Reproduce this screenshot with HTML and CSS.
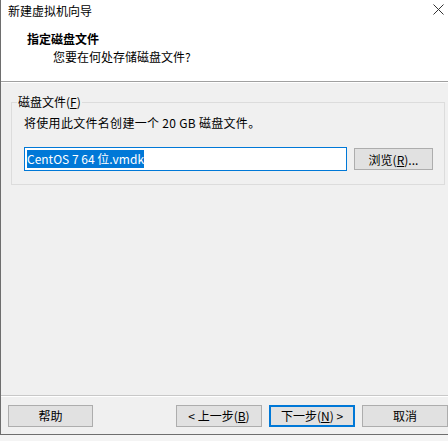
FILE: index.html
```html
<!DOCTYPE html>
<html lang="zh-CN">
<head>
<meta charset="utf-8">
<title>新建虚拟机向导</title>
<link rel="stylesheet" href="styles.css">
</head>
<body>
<div class="window">
  <div class="titlebar">
    <span class="title">新建虚拟机向导</span>
    <svg class="close" width="11" height="11" viewBox="0 0 11 11"><path d="M0.5 0.5L10.5 10.5M10.5 0.5L0.5 10.5" stroke="#333" stroke-width="1"/></svg>
  </div>
  <div class="header">
    <div class="h-title">指定磁盘文件</div>
    <div class="h-sub">您要在何处存储磁盘文件?</div>
  </div>
  <div class="content">
    <fieldset class="group">
      <legend>磁盘文件(<u>F</u>)</legend>
      <div class="desc">将使用此文件名创建一个 20 GB 磁盘文件。</div>
      <div class="row">
        <div class="input"><span class="sel">CentOS 7 64 位.vmdk</span></div>
        <div class="btn browse">浏览(<u>R</u>)...</div>
      </div>
    </fieldset>
  </div>
  <div class="footer">
    <div class="btn help">帮助</div>
    <div class="nav">
      <div class="btn">&lt; 上一步(<u>B</u>)</div>
      <div class="btn default">下一步(<u>N</u>) &gt;</div>
      <div class="btn">取消</div>
    </div>
  </div>
</div>
</body>
</html>
```
FILE: styles.css
```css
html, body {
  margin: 0;
  padding: 0;
  background: #f4f4f4;
}
body {
  width: 448px;
  height: 441px;
  overflow: hidden;
  font-family: "Noto Sans CJK SC", "Microsoft YaHei", sans-serif;
  font-size: 12px;
  color: #000;
}
.window {
  width: 448px;
  height: 435px;
  box-sizing: border-box;
  border-left: 1px solid #6e6e6e;
  border-bottom: 1px solid #6e6e6e;
  background: #f0f0f0;
  display: flex;
  flex-direction: column;
}
.titlebar {
  height: 30px;
  background: #fff;
  display: flex;
  align-items: flex-start;
  justify-content: space-between;
  padding: 0 4px 0 7px;
  box-sizing: border-box;
  flex-shrink: 0;
}
.title {
  font-size: 12px;
  line-height: 17px;
  padding-top: 2px;
}
.close {
  margin-top: 4px;
}
.header {
  height: 52px;
  background: #fff;
  border-bottom: 1px solid #a0a0a0;
  box-sizing: border-box;
  box-shadow: 0 1px 0 #fff;
  flex-shrink: 0;
}
.h-title {
  font-weight: bold;
  padding-left: 26px;
  line-height: 17px;
  margin-top: 0;
}
.h-sub {
  padding-left: 52px;
  line-height: 17px;
  margin-top: 1px;
}
.content {
  flex: 1;
  padding: 12px 3px 0 10px;
}
.group {
  margin: 0;
  border: 1px solid #dcdcdc;
  padding: 0 12px 13px 12px;
  min-width: 0;
}
.group legend {
  padding: 0 1px;
  margin-left: -7px;
  line-height: 16px;
}
.desc {
  line-height: 17px;
  margin-top: 4px;
  letter-spacing: 0.3px;
}
.row {
  display: flex;
  align-items: center;
  margin-top: 16px;
}
.input {
  width: 323px;
  height: 24px;
  flex-shrink: 0;
  box-sizing: border-box;
  border: 1px solid #0078d7;
  background: #fff;
  padding: 0 2px;
  display: flex;
  align-items: center;
  font-size: 12px;
}
.sel {
  background: #0078d7;
  color: #fff;
  line-height: 18px;
}
.btn {
  height: 22px;
  box-sizing: border-box;
  border: 1px solid #adadad;
  background: #e1e1e1;
  display: flex;
  align-items: center;
  justify-content: center;
  width: 85px;
  flex-shrink: 0;
}
.browse {
  width: 79px;
  margin-left: 7px;
}
.footer {
  height: 39px;
  flex-shrink: 0;
  border-top: 1px solid #c8c8c8;
  box-shadow: inset 0 1px 0 #fff;
  display: flex;
  align-items: center;
  justify-content: space-between;
  padding: 1px 0 0 7px;
  box-sizing: border-box;
}
.nav {
  display: flex;
  gap: 7px;
}
.nav .btn {
  width: 86px;
}
.btn.default {
  border-color: #0078d7;
  box-shadow: inset 0 0 0 1px #0078d7;
}
```
